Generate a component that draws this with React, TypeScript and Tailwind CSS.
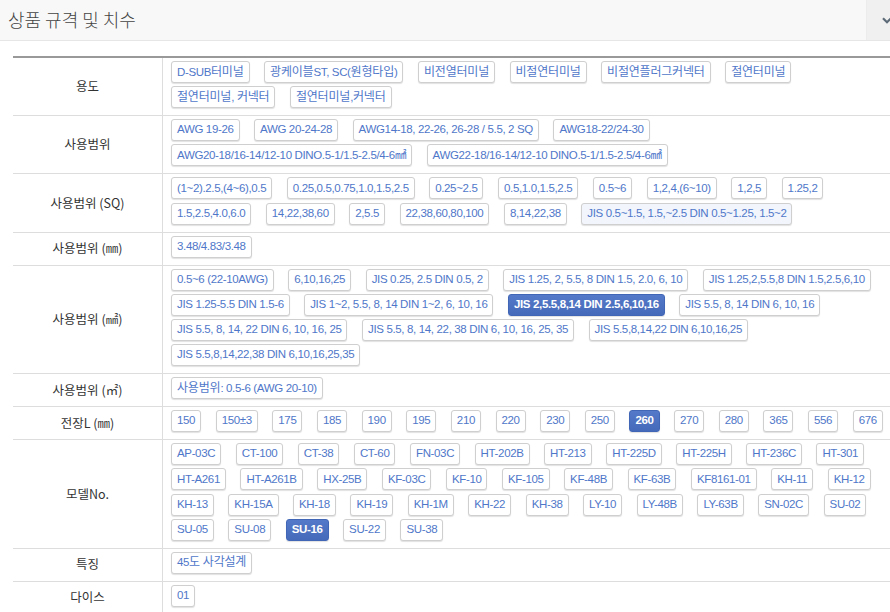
import React from "react";

type Row = {
  label: string;
  items: string[];
  active?: string;
  hover?: string;
};

const rows: Row[] = [
  {
    label: "용도",
    items: [
      "D-SUB터미널",
      "광케이블ST, SC(원형타입)",
      "비전열터미널",
      "비절연터미널",
      "비절연플러그커넥터",
      "절연터미널",
      "절연터미널, 커넥터",
      "절연터미널,커넥터",
    ],
  },
  {
    label: "사용범위",
    items: [
      "AWG 19-26",
      "AWG 20-24-28",
      "AWG14-18, 22-26, 26-28 / 5.5, 2 SQ",
      "AWG18-22/24-30",
      "AWG20-18/16-14/12-10 DINO.5-1/1.5-2.5/4-6㎟",
      "AWG22-18/16-14/12-10 DINO.5-1/1.5-2.5/4-6㎟",
    ],
  },
  {
    label: "사용범위 (SQ)",
    items: [
      "(1~2).2.5,(4~6),0.5",
      "0.25,0.5,0.75,1.0,1.5,2.5",
      "0.25~2.5",
      "0.5,1.0,1.5,2.5",
      "0.5~6",
      "1,2,4,(6~10)",
      "1,2,5",
      "1.25,2",
      "1.5,2.5,4.0,6.0",
      "14,22,38,60",
      "2,5.5",
      "22,38,60,80,100",
      "8,14,22,38",
      "JIS 0.5~1.5, 1.5,~2.5 DIN 0.5~1.25, 1.5~2",
    ],
    hover: "JIS 0.5~1.5, 1.5,~2.5 DIN 0.5~1.25, 1.5~2",
  },
  { label: "사용범위 (㎜)", items: ["3.48/4.83/3.48"] },
  {
    label: "사용범위 (㎟)",
    items: [
      "0.5~6 (22-10AWG)",
      "6,10,16,25",
      "JIS 0.25, 2.5 DIN 0.5, 2",
      "JIS 1.25, 2, 5.5, 8 DIN 1.5, 2.0, 6, 10",
      "JIS 1.25,2,5.5,8 DIN 1.5,2.5,6,10",
      "JIS 1.25-5.5 DIN 1.5-6",
      "JIS 1~2, 5.5, 8, 14 DIN 1~2, 6, 10, 16",
      "JIS 2,5.5,8,14 DIN 2.5,6,10,16",
      "JIS 5.5, 8, 14 DIN 6, 10, 16",
      "JIS 5.5, 8, 14, 22 DIN 6, 10, 16, 25",
      "JIS 5.5, 8, 14, 22, 38 DIN 6, 10, 16, 25, 35",
      "JIS 5.5,8,14,22 DIN 6,10,16,25",
      "JIS 5.5,8,14,22,38 DIN 6,10,16,25,35",
    ],
    active: "JIS 2,5.5,8,14 DIN 2.5,6,10,16",
  },
  { label: "사용범위 (㎡)", items: ["사용범위: 0.5-6 (AWG 20-10)"] },
  {
    label: "전장L (㎜)",
    items: [
      "150", "150±3", "175", "185", "190", "195", "210", "220",
      "230", "250", "260", "270", "280", "365", "556", "676",
    ],
    active: "260",
  },
  {
    label: "모델No.",
    items: [
      "AP-03C", "CT-100", "CT-38", "CT-60", "FN-03C", "HT-202B", "HT-213",
      "HT-225D", "HT-225H", "HT-236C", "HT-301", "HT-A261", "HT-A261B",
      "HX-25B", "KF-03C", "KF-10", "KF-105", "KF-48B", "KF-63B", "KF8161-01",
      "KH-11", "KH-12", "KH-13", "KH-15A", "KH-18", "KH-19", "KH-1M", "KH-22",
      "KH-38", "LY-10", "LY-48B", "LY-63B", "SN-02C", "SU-02", "SU-05",
      "SU-08", "SU-16", "SU-22", "SU-38",
    ],
    active: "SU-16",
  },
  { label: "특징", items: ["45도 사각설계"] },
  { label: "다이스", items: ["01"] },
];

const chipBase =
  "inline-flex h-[22px] items-center rounded-[3px] border px-[5px] text-[11.5px] tracking-[-0.35px] leading-none whitespace-nowrap shadow-[0_1px_1px_rgba(0,0,0,0.12)]";
const chipIdle = "border-[#cfcfcf] bg-white text-[#4f77c9]";
const chipHover = "border-[#cfcfcf] bg-[#f2f5fc] text-[#4f77c9]";
const chipActive =
  "border-[#4166b6] bg-gradient-to-b from-[#5479c8] to-[#456ab9] font-bold text-white";

// 한글 구간은 조금 더 크게 (기준 화면의 맑은 고딕 폭에 맞춤)
function Mixed({ text }: { text: string }) {
  const parts = text.split(/([\uAC00-\uD7A3]+)/);
  return (
    <>
      {parts.map((p, i) =>
        /[\uAC00-\uD7A3]/.test(p) ? (
          <span key={i} className="text-[12px] tracking-[-0.2px]">
            {p}
          </span>
        ) : (
          p
        ),
      )}
    </>
  );
}

function Chip({ text, state }: { text: string; state: "idle" | "hover" | "active" }) {
  const cls = state === "active" ? chipActive : state === "hover" ? chipHover : chipIdle;
  return (
    <span className={`${chipBase} ${cls}`}>
      <span>
        <Mixed text={text} />
      </span>
    </span>
  );
}

export default function App() {
  return (
    <div className="h-[612px] w-[890px] overflow-hidden bg-white font-['Liberation_Sans','Noto_Sans_CJK_KR',sans-serif]">
      <div className="w-[906px]">
        <div className="flex h-[41px] border-b border-[#e6e6e6] bg-[#f8f8f8]">
          <div className="flex flex-1 items-center pl-[8px] pb-[1px] text-[18px] text-[#444] font-['Noto_Sans_CJK_KR',sans-serif] font-light">
            상품 규격 및 치수
          </div>
          <div className="flex w-[40px] items-center justify-center border-l border-[#ececec] bg-[#f0f0f0]">
            <svg width="10" height="7" viewBox="0 0 10 7">
              <polyline
                points="1,1.2 5,5.2 9,1.2"
                fill="none"
                stroke="#5d6b78"
                strokeWidth="2.2"
              />
            </svg>
          </div>
        </div>

        <div className="mx-[13px] mt-[15px] border-t-2 border-[#999]">
          {rows.map((row) => (
            <div key={row.label} className="flex border-b border-[#dddddd]">
              <div className="flex w-[150px] shrink-0 items-center justify-center border-r border-[#dddddd] text-[12.5px] text-[#333] font-['Noto_Sans_CJK_KR',sans-serif]">
                {row.label}
              </div>
              <div className="flex flex-1 flex-wrap content-start gap-x-[14.5px] gap-y-[3.2px] pl-[8px] pr-[6px] pt-[3px] pb-[7px]">
                {row.items.map((item, i) => (
                  <Chip
                    key={item + i}
                    text={item}
                    state={
                      item === row.active ? "active" : item === row.hover ? "hover" : "idle"
                    }
                  />
                ))}
              </div>
            </div>
          ))}
        </div>
      </div>
    </div>
  );
}
